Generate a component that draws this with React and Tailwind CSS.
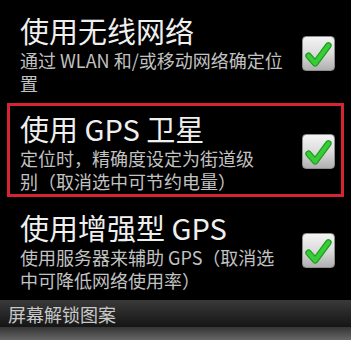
import React from "react";

const font = { fontFamily: '"Noto Sans CJK SC", "Noto Sans", sans-serif' };

function Check() {
  return (
    <div className="w-[33px] h-[35px] shrink-0 rounded-[4px] bg-gradient-to-b from-[#f4f4f4] via-[#dcdcdc] to-[#b0b0b0] border border-[#8e8e8e] flex items-center justify-center">
      <svg width="33" height="35" viewBox="0 0 33 35">
        <path d="M6 20 L13 28 L27 9" fill="none" stroke="#1c9a1c" strokeWidth="7" strokeLinecap="round" strokeLinejoin="round" />
        <path d="M6 20 L13 28 L27 9" fill="none" stroke="#38cc38" strokeWidth="4.5" strokeLinecap="round" strokeLinejoin="round" />
      </svg>
    </div>
  );
}

function Texts({ title, l1, l2 }) {
  return (
    <div className="flex-1 min-w-0 flex flex-col">
      <p className="text-[29px] leading-[38px] text-[#efefef] whitespace-nowrap">{title}</p>
      <p className="text-[18px] leading-[23px] text-[#c2c2c2] whitespace-nowrap">
        {l1}
        <br />
        {l2}
      </p>
    </div>
  );
}

export default function App() {
  return (
    <div className="w-[351px] h-[340px] bg-black overflow-hidden flex flex-col" style={font}>
      <div className="h-[103px] shrink-0 flex items-center pt-[11px] pb-[8px] pl-[20px] pr-[16px]">
        <Texts title="使用无线网络" l1="通过 WLAN 和/或移动网络确定位" l2="置" />
        <Check />
      </div>
      <div className="mx-[7px] h-[94px] shrink-0 border-[3px] border-[#d42530] flex items-center pt-[3px] pb-[1px] pl-[10px] pr-[6px]">
        <Texts title="使用 GPS 卫星" l1="定位时，精确度设定为街道级" l2="别（取消选中可节约电量）" />
        <Check />
      </div>
      <div className="mt-[3px] h-[100px] shrink-0 flex items-center pt-[8px] pb-[8px] pl-[20px] pr-[16px]">
        <Texts title="使用增强型 GPS" l1="使用服务器来辅助 GPS（取消选" l2="中可降低网络使用率）" />
        <Check />
      </div>
      <div className="h-[27px] shrink-0 bg-gradient-to-b from-[#3a3a3a] to-[#151515] flex items-center pl-[8px]">
        <span className="text-[18px] leading-[22px] text-[#c8c8c8]">屏幕解锁图案</span>
      </div>
      <div className="flex-1 bg-gradient-to-b from-[#353535] to-[#666666]" />
    </div>
  );
}
